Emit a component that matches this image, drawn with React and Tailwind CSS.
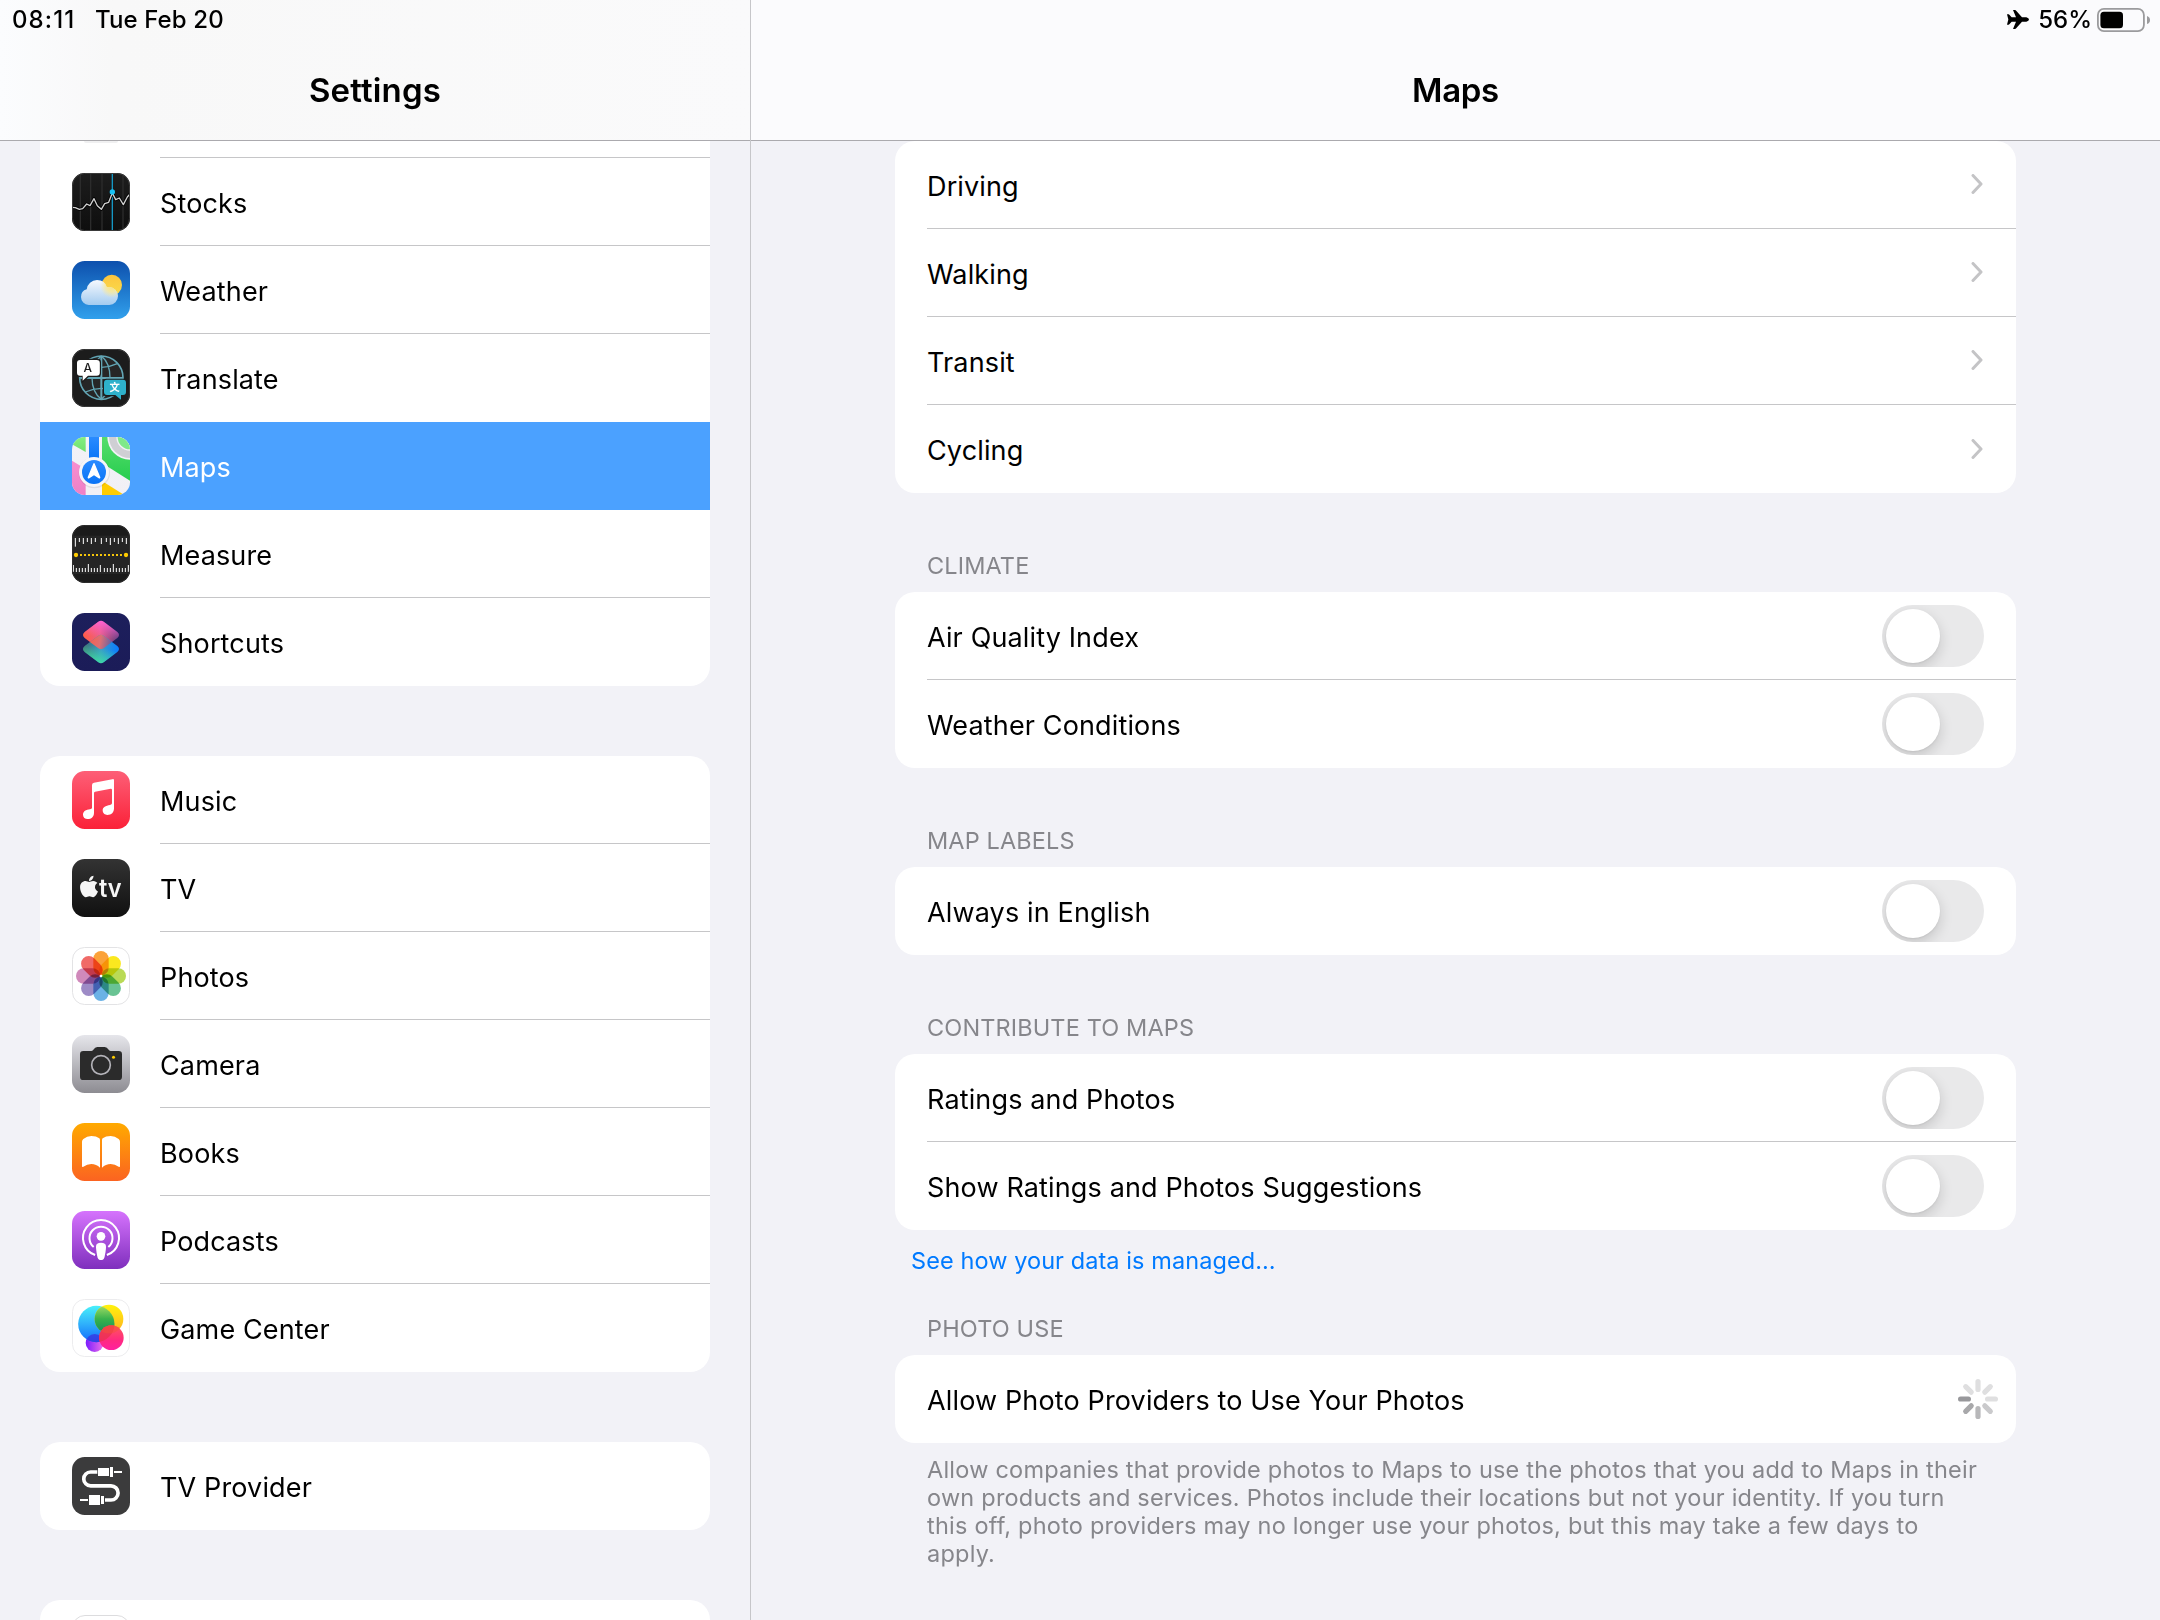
import React from "react";
import { FaApple } from "react-icons/fa";

/* App icons: drawn on a 174 x 174 grid and shown at 58 px. */
function Tile({ id, from, to, children, border }) {
  return (
    <svg viewBox="0 0 174 174" className="size-[58px] shrink-0">
      <defs>
        <linearGradient id={`${id}-bg`} x1="0" y1="0" x2="0" y2="1">
          <stop offset="0" stopColor={from} />
          <stop offset="1" stopColor={to} />
        </linearGradient>
        <clipPath id={`${id}-clip`}>
          <rect width="174" height="174" rx="38" />
        </clipPath>
      </defs>
      <g clipPath={`url(#${id}-clip)`}>
        <rect width="174" height="174" fill={`url(#${id}-bg)`} />
        {children}
      </g>
      {border && <rect x="1.5" y="1.5" width="171" height="171" rx="36.5" fill="none" stroke={border} strokeWidth="3" />}
    </svg>
  );
}

function Grad({ id, stops, x1 = 0, y1 = 0, x2 = 0, y2 = 1 }) {
  return (
    <linearGradient id={id} x1={x1} y1={y1} x2={x2} y2={y2}>
      {stops.map(([o, c, a], i) => (
        <stop key={i} offset={o} stopColor={c} stopOpacity={a ?? 1} />
      ))}
    </linearGradient>
  );
}

const StocksIcon = () => (
  <Tile id="stocks" from="#1d1d1d" to="#0e0e0e" border="#3a3a3a">
    <path d="M25 0V174M56 0V174M90 0V174M153 0V174" stroke="#2c2c2c" strokeWidth="4" />
    <path d="M121 0V174" stroke="#1597c4" strokeWidth="4" />
    <path
      d="M0 103L10 104L22 109L32 107L44 93L54 98L66 77L76 98L88 109L98 92L110 88L121 60L131 80L142 75L154 95L166 72L174 63"
      fill="none" stroke="#000" strokeWidth="9" strokeLinejoin="round"
    />
    <path
      d="M0 103L10 104L22 109L32 107L44 93L54 98L66 77L76 98L88 109L98 92L110 88L121 60L131 80L142 75L154 95L166 72L174 63"
      fill="none" stroke="#d0d0d0" strokeWidth="4" strokeLinejoin="round"
    />
    <circle cx="121" cy="57" r="8" fill="#19c3f5" />
  </Tile>
);

const WeatherIcon = () => (
  <Tile id="weather" from="#0d50ad" to="#31a0ec">
    <defs>
      <Grad id="w-sun" stops={[[0, "#fdc53e"], [1, "#f9dc4c"]]} />
      <linearGradient id="w-cloud" gradientUnits="userSpaceOnUse" x1="0" y1="57" x2="0" y2="132">
        <stop offset="0" stopColor="#f6f9fe" />
        <stop offset="1" stopColor="#a3cbf0" />
      </linearGradient>
      <radialGradient id="w-glow" gradientUnits="userSpaceOnUse" cx="119" cy="76" r="34">
        <stop offset="0" stopColor="#fbe37a" />
        <stop offset="0.5" stopColor="#fbe88f" stopOpacity="0.75" />
        <stop offset="1" stopColor="#fbe88f" stopOpacity="0" />
      </radialGradient>
      <clipPath id="w-shape">
        <circle cx="75" cy="88" r="31" />
        <circle cx="51" cy="108" r="24" />
        <circle cx="111" cy="105" r="27" />
        <rect x="50" y="90" width="62" height="42" />
      </clipPath>
    </defs>
    <circle cx="119.500" cy="72" r="30.500" fill="url(#w-sun)" />
    <g clipPath="url(#w-shape)">
      <rect width="174" height="174" fill="url(#w-cloud)" />
      <rect width="174" height="174" fill="url(#w-glow)" />
    </g>
  </Tile>
);

const TranslateIcon = () => (
  <Tile id="translate" from="#1c1c1c" to="#1c1c1c" border="#3a3a3a">
    <g fill="none" stroke="#62a5b4" strokeWidth="5">
      <circle cx="88" cy="86" r="65" fill="#262626" />
      <path d="M88 21V151M23 87H153" strokeWidth="6" />
      <path d="M88 21C112 40 114 66 114 86M88 21C62 40 60 66 60 86S64 132 88 151M114 86C114 106 112 132 88 151M40 44Q88 66 136 44M40 129Q88 107 136 129" strokeWidth="4" />
    </g>
    <path d="M22 29H76Q87 29 87 40V73Q87 84 76 84H50L30 102V84H22Q11 84 11 73V40Q11 29 22 29Z" fill="#1c1c1c" />
    <path d="M24 33H74Q83.500 33 83.500 42V71Q83.500 80 74 80H48L32 95V80H24Q15 80 15 71V42Q15 33 24 33Z" fill="#fff" />
    <path d="M104 89H154Q165 89 165 100V131Q165 142 154 142H150V156L132 142H104Q93 142 93 131V100Q93 89 104 89Z" fill="#1c1c1c" />
    <path d="M105 92.500H153Q162 92.500 162 102V129Q162 138 153 138H147V152L130 138H105Q96 138 96 129V102Q96 92.500 105 92.500Z" fill="#2eb1cb" />
    <text x="47" y="70" textAnchor="middle" fontFamily="Inter, sans-serif" fontSize="36" fontWeight="500" fill="#1c1c1c">A</text>
    <text x="128" y="127" textAnchor="middle" fontFamily="'Noto Sans CJK SC', sans-serif" fontSize="31" fontWeight="700" fill="#fff">文</text>
  </Tile>
);

const MapsIcon = () => (
  <Tile id="maps" from="#f3f2f7" to="#f1f0f5">
    <defs>
      <Grad id="m-green" stops={[[0, "#55dd6c"], [1, "#27cd4e"]]} />
      <Grad id="m-lime" stops={[[0, "#84ef80"], [1, "#70e070"]]} />
      <Grad id="m-blue" stops={[[0, "#2a8bff"], [1, "#0a74f6"]]} />
      <Grad id="m-pink" stops={[[0, "#f78fd0"], [1, "#ee80c6"]]} />
    </defs>
    <path d="M0 0H41V45L0 22Z" fill="url(#m-lime)" />
    <path d="M90 0H174V131L90 78Z" fill="url(#m-green)" />
    <circle cx="174" cy="0" r="68" fill="#f3f2f7" />
    <circle cx="174" cy="0" r="63" fill="#cfcfd4" />
    <circle cx="174" cy="0" r="41" fill="#f3f2f7" />
    <circle cx="174" cy="0" r="37" fill="#7fe98a" />
    <path d="M0 71L41 96V174H0Z" fill="url(#m-pink)" />
    <path d="M90 132L152 171V174H90Z" fill="#ffcc02" />
    <rect x="51" y="0" width="30" height="70" fill="url(#m-blue)" />
    <circle cx="67" cy="107" r="47" fill="#000" opacity=".08" />
    <circle cx="66" cy="105" r="45" fill="#f5f5f8" />
    <circle cx="66" cy="105" r="36" fill="url(#m-blue)" />
    <path d="M66 80L83 121Q84 124 81 122L66 112L51 122Q48 124 49 121Z" fill="#fff" stroke="#fff" strokeWidth="4" strokeLinejoin="round" />
  </Tile>
);

const topTicks = [[10, 65], [22, 51], [34, 57], [46, 51], [58, 57], [70, 51], [88, 57], [103, 51], [115, 60], [127, 51], [139, 57], [151, 51], [163, 57]];
const bottomTicks = [[4, 120], [13, 129], [22, 129], [31, 129], [40, 129], [49, 117], [58, 129], [67, 129], [76, 129], [85, 120], [97, 129], [106, 129], [115, 129], [124, 117], [133, 129], [142, 129], [151, 129], [160, 129], [169, 120]];

const MeasureIcon = () => (
  <Tile id="measure" from="#1b1b1b" to="#1b1b1b" border="#2e2e2e">
    <rect y="32" width="174" height="115" fill="#252525" />
    {topTicks.map(([x, y]) => <rect key={x} x={x - 1.5} y="39" width="3" height={y - 39} fill="#fff" />)}
    {bottomTicks.map(([x, y]) => <rect key={x} x={x - 1.5} y={y} width="3" height={141 - y} fill="#fff" />)}
    <circle cx="12" cy="90" r="6.500" fill="#fc0" />
    <circle cx="162" cy="90" r="6.500" fill="#fc0" />
    {[24, 36, 48, 60, 72, 84, 96, 108, 120, 132, 144].map((x) => <rect key={x} x={x} y="87" width="6" height="6" fill="#f5c60a" />)}
  </Tile>
);

/* Gradient coordinates are relative to the centre line of each diamond. */
const ShortcutsIcon = () => (
  <Tile id="shortcuts" from="#1d1f5c" to="#1b1c58">
    <defs>
      <linearGradient id="s-top" gradientUnits="userSpaceOnUse" x1="36" y1="12" x2="138" y2="0">
        <stop offset="0" stopColor="#ff5c46" />
        <stop offset="0.5" stopColor="#ea5f8a" />
        <stop offset="1" stopColor="#5c3c80" />
      </linearGradient>
      <linearGradient id="s-pink" gradientUnits="userSpaceOnUse" x1="92" y1="-44" x2="84" y2="8">
        <stop offset="0" stopColor="#ff62dc" stopOpacity="0.95" />
        <stop offset="1" stopColor="#ff5fc0" stopOpacity="0" />
      </linearGradient>
      <linearGradient id="s-bot" gradientUnits="userSpaceOnUse" x1="36" y1="-4" x2="138" y2="0">
        <stop offset="0" stopColor="#3d6a72" />
        <stop offset="0.5" stopColor="#3a9bc8" />
        <stop offset="1" stopColor="#0a7dff" />
      </linearGradient>
      <linearGradient id="s-mint" gradientUnits="userSpaceOnUse" x1="80" y1="44" x2="92" y2="-4">
        <stop offset="0" stopColor="#3fe0a0" stopOpacity="0.95" />
        <stop offset="1" stopColor="#3fe0a0" stopOpacity="0" />
      </linearGradient>
      <linearGradient id="s-mix" gradientUnits="userSpaceOnUse" x1="50" y1="-24" x2="125" y2="-10">
        <stop offset="0" stopColor="#f8604c" />
        <stop offset="0.45" stopColor="#dd6f74" />
        <stop offset="1" stopColor="#4a5fb0" />
      </linearGradient>
      <path id="s-d" d="M76 -37.500Q87 -47.500 98 -37.500L136 -9Q146 0 136 9L98 37.500Q87 47.500 76 37.500L38 9Q28 0 38 -9Z" />
      <clipPath id="s-clip"><use href="#s-d" y="66" /></clipPath>
    </defs>
    <use href="#s-d" y="66" fill="url(#s-top)" />
    <use href="#s-d" y="66" fill="url(#s-pink)" />
    <use href="#s-d" y="108" fill="url(#s-bot)" />
    <use href="#s-d" y="108" fill="url(#s-mint)" />
    <g clipPath="url(#s-clip)"><use href="#s-d" y="108" fill="url(#s-mix)" /></g>
  </Tile>
);

const MusicIcon = () => (
  <Tile id="music" from="#fd5f77" to="#fb2138">
    <path
      d="M126 28Q126 23 121 24.500L66 35Q60 36 60 42V110Q60 114 54 115C42 116 33 121 33 131C33 139 39 144 47 144C58 144 66 137 66 125V66Q66 63 69 62.500L116 53.500Q120 53 120 57V97Q120 101 114 102C101 104 92 109 92 118C92 127 99 132 106 132C118 132 126 125 126 112Z"
      fill="#fff"
    />
  </Tile>
);

const TvIcon = () => (
  <Tile id="tv" from="#333" to="#101010">
    <FaApple x="14.500" y="46" size="73" color="#f6f6f6" />
    <text x="81" y="113" fontFamily="Inter, sans-serif" fontSize="76" fontWeight="600" fill="#f6f6f6" textLength="68" lengthAdjust="spacingAndGlyphs">tv</text>
  </Tile>
);

const petals = ["#fba23a", "#fbe81f", "#b9da55", "#69c393", "#6bb2e6", "#9d8bc6", "#d089bb", "#f06a68"];
const PhotosIcon = () => (
  <Tile id="photos" from="#fff" to="#fff" border="#e3e3e5">
    <g className="isolate">
      {petals.map((c, i) => (
        <rect key={c} x="64" y="12" width="46" height="73" rx="23" fill={c} className="mix-blend-multiply" transform={`rotate(${i * 45} 87 87)`} />
      ))}
    </g>
    <circle cx="87" cy="87" r="4" fill="#fff" />
  </Tile>
);

const CameraIcon = () => (
  <Tile id="camera" from="#e6e6eb" to="#8d8c92">
    <path d="M34 48H58Q61 48 64 44Q69 36 76 36H98Q105 36 110 44Q113 48 116 48H140Q150 48 150 58V125Q150 135 140 135H34Q24 135 24 125V58Q24 48 34 48Z" fill="#2b2b2b" />
    <circle cx="87" cy="90" r="28" fill="none" stroke="#b4b3b9" strokeWidth="5" />
    <circle cx="124.500" cy="67" r="4.500" fill="#fc0" />
  </Tile>
);

const BooksIcon = () => (
  <Tile id="books" from="#ffaa00" to="#fb6321">
    <path d="M30 56Q30 51 34 48Q45 39 58 39Q73 39 82 46Q84 48 84 52V134Q73 123 58 123Q45 123 34 131Q30 133 30 129Z" fill="#fff" />
    <path d="M144 56Q144 51 140 48Q129 39 116 39Q101 39 92 46Q90 48 90 52V134Q101 123 116 123Q129 123 140 131Q144 133 144 129Z" fill="#fff" />
  </Tile>
);

const PodcastsIcon = () => (
  <Tile id="podcasts" from="#d673fd" to="#7f2fbd">
    <g fill="none" stroke="#fff" strokeWidth="6">
      <path d="M69.400 132A54 54 0 1 1 104.600 132" />
      <path d="M65 108A34.500 34.500 0 1 1 109 108" />
    </g>
    <circle cx="87" cy="76" r="13" fill="#fff" />
    <path d="M87 95.500C97 95.500 102 99 102 107C102 115 99 133 97 140C95.500 145 92 147 87 147S78.500 145 77 140C75 133 72 115 72 107C72 99 77 95.500 87 95.500Z" fill="#fff" />
  </Tile>
);

const GameCenterIcon = () => (
  <Tile id="game" from="#fff" to="#fff" border="#ececee">
    <defs>
      <Grad id="g-cyan" stops={[[0, "#48f0fa"], [0.500, "#2fb0fb"], [1, "#126cfc"]]} />
      <Grad id="g-yellow" stops={[[0, "#fff30c"], [1, "#ffae22"]]} />
      <Grad id="g-green" stops={[[0, "#a8dd66"], [0.500, "#38b24c"], [1, "#128f5c"]]} />
      <Grad id="g-pink" stops={[[0, "#ff5a5a"], [0.600, "#ff2a80"], [1, "#ff20a0"]]} />
      <Grad id="g-purple" x2={1} y2={0} stops={[[0, "#7a1cff"], [1, "#f070e8"]]} />
      <clipPath id="g-c1"><circle cx="73" cy="75" r="54.500" /></clipPath>
      <clipPath id="g-c2"><circle cx="111" cy="60" r="43" /></clipPath>
    </defs>
    <circle cx="68" cy="132" r="27" fill="url(#g-purple)" />
    <circle cx="73" cy="75" r="54.500" fill="url(#g-cyan)" />
    <g clipPath="url(#g-c1)"><circle cx="68" cy="132" r="27" fill="#3a32e0" opacity=".75" /></g>
    <circle cx="111" cy="60" r="43" fill="url(#g-yellow)" />
    <g clipPath="url(#g-c1)"><circle cx="111" cy="60" r="43" fill="url(#g-green)" /></g>
    <circle cx="118" cy="116" r="37" fill="url(#g-pink)" />
    <g clipPath="url(#g-c1)"><circle cx="118" cy="116" r="37" fill="#e8304c" opacity=".7" /></g>
    <g clipPath="url(#g-c2)"><circle cx="118" cy="116" r="37" fill="#f5503c" opacity=".5" /></g>
  </Tile>
);

const TvProviderIcon = () => (
  <Tile id="tvp" from="#3b3b3c" to="#3b3b3c">
    <path d="M76 45H56A20.500 20.500 0 0 0 56 86.500H117A21 21 0 0 1 117 129H99" fill="none" stroke="#fff" strokeWidth="11" />
    <g fill="#fff">
      <rect x="78" y="33" width="33" height="24" />
      <rect x="114" y="30" width="9" height="30" />
      <rect x="126" y="42" width="24" height="6" />
      <rect x="87" y="117" width="9" height="24" />
      <rect x="51" y="114" width="33" height="30" />
      <rect x="24" y="126" width="24" height="6" />
    </g>
  </Tile>
);

const BlankIcon = () => <div className="size-[58px] shrink-0 rounded-[13px] border border-[#dcdcde] bg-white" />;

function AirplaneGlyph() {
  return (
    <svg viewBox="0 0 66 57" className="mr-[9px] h-[19px] w-[22px]">
      <path d="M14 22H27L18 0H24Q26 0 27.500 2L45 22H58Q66 24 66 28.500T58 35H45L27.500 55Q26 57 24 57H18L27 35H14L7 43Q6 44 5 44H0L4 28.500L0 13H5Q6 13 7 14Z" fill="#000" />
    </svg>
  );
}

function BatteryGlyph() {
  return (
    <svg viewBox="0 0 54 24" className="ml-[5px] h-6 w-[54px]">
      <rect x="0.900" y="0.900" width="46" height="22.200" rx="6" fill="none" stroke="#9b9b9d" strokeWidth="1.800" />
      <rect x="3.400" y="3.700" width="22.600" height="16.600" rx="3.500" fill="#000" />
      <path d="M50 8V16Q53 15 53 12T50 8Z" fill="#9b9b9d" />
    </svg>
  );
}

const spinnerBars = ["#dfdfe0", "#dfdfe0", "#dfdfe0", "#cacacc", "#b8b8ba", "#a8a8aa", "#98989b", "#dfdfe0"];
const Spinner = () => (
  <svg viewBox="-20 -20 40 40" className="-mr-3.5 size-10">
    {spinnerBars.map((c, i) => (
      <rect key={i} x="-2.600" y="-20" width="5.200" height="13" rx="2.600" fill={c} transform={`rotate(${i * 45})`} />
    ))}
  </svg>
);

const Chevron = () => (
  <svg viewBox="0 0 12 20" className="mr-[1.5px] mb-px h-5 w-3">
    <path d="M2 1.500L10 10L2 18.500" fill="none" stroke="#c4c4c6" strokeWidth="3" strokeLinecap="round" strokeLinejoin="round" />
  </svg>
);

const Toggle = () => (
  <div className="h-[62px] w-[102px] overflow-hidden rounded-full bg-[#e9e9ea] p-1">
    <div className="size-[54px] rounded-full bg-white shadow-[0_5px_14px_rgba(0,0,0,0.16),0_1px_2px_rgba(0,0,0,0.06)]" />
  </div>
);

const label = "text-[27px] leading-[34px] tracking-[0.14px]";

function SidebarRow({ icon: Icon, text, selected, divider }) {
  return (
    <div className={`flex h-[88px] items-center pl-8 ${selected ? "bg-[#4ba1ff] text-white" : ""}`}>
      <Icon />
      <div className={`ml-[30px] flex h-full flex-1 items-center pt-1 ${divider ? "border-b border-[#c6c6c8]" : ""}`}>
        <span className={label}>{text}</span>
      </div>
    </div>
  );
}

function SidebarGroup({ rows, className = "rounded-[20px]" }) {
  return (
    <div className={`overflow-hidden bg-white ${className}`}>
      {rows.map(([text, icon, opts], i) => (
        <SidebarRow key={text} text={text} icon={icon} selected={opts === "selected"} divider={i < rows.length - 1 && !opts} />
      ))}
    </div>
  );
}

function Card({ rows }) {
  return (
    <div className="rounded-[20px] bg-white pl-8">
      {rows.map(([text, Control], i) => (
        <div key={text} className={`flex h-[88px] items-center justify-between pr-8 ${i < rows.length - 1 ? "border-b border-[#c6c6c8]" : ""}`}>
          <span className={`${label} pt-1`}>{text}</span>
          <Control />
        </div>
      ))}
    </div>
  );
}

const caption = "text-[23.5px] leading-[28px] tracking-[0.13px] text-[#86868b]";
const SectionTitle = ({ children }) => (
  <div className={`flex h-[99px] items-end pb-3 pl-8 ${caption}`}>{children}</div>
);

export default function App() {
  return (
    <div className="flex h-[1620px] w-[2160px] overflow-hidden bg-[#f2f2f7] font-['Inter',sans-serif] text-black">
      <aside className="flex w-[751px] shrink-0 flex-col border-r border-[#c6c6c9]">
        <header className="h-[141px] shrink-0 border-b border-[#abaaae] bg-linear-to-r from-[#fbfcfe] via-[#f8f8f8] via-15% to-[#fafafb]">
          <div className="flex h-[39px] items-center pl-3 text-[24px] leading-none font-medium">
            <span className="w-[83px] tracking-[1.1px]">08:11</span>
            <span className="tracking-[0.1px]">Tue Feb 20</span>
          </div>
          <h1 className="flex h-[101px] items-center justify-center pt-0.5 text-[33px] leading-none font-semibold tracking-[0.15px]">Settings</h1>
        </header>
        <div className="flex-1 overflow-hidden pr-10 pl-10">
          <div className="flex h-[17px] items-start bg-white pl-8">
            <div className="h-[2px] w-[58px] px-3">
              <div className="h-[2px] rounded-b-full bg-[#f0f0f1]" />
            </div>
            <div className="ml-[30px] h-full flex-1 border-b border-[#c6c6c8]" />
          </div>
          <SidebarGroup
            className="rounded-b-[20px]"
            rows={[
              ["Stocks", StocksIcon],
              ["Weather", WeatherIcon],
              ["Translate", TranslateIcon, "plain"],
              ["Maps", MapsIcon, "selected"],
              ["Measure", MeasureIcon],
              ["Shortcuts", ShortcutsIcon],
            ]}
          />
          <div className="mt-[70px]">
            <SidebarGroup
              rows={[
                ["Music", MusicIcon],
                ["TV", TvIcon],
                ["Photos", PhotosIcon],
                ["Camera", CameraIcon],
                ["Books", BooksIcon],
                ["Podcasts", PodcastsIcon],
                ["Game Center", GameCenterIcon],
              ]}
            />
          </div>
          <div className="mt-[70px]">
            <SidebarGroup rows={[["TV Provider", TvProviderIcon]]} />
          </div>
          <div className="mt-[70px]">
            <SidebarGroup rows={[["", BlankIcon]]} />
          </div>
        </div>
      </aside>
      <main className="flex flex-1 flex-col">
        <header className="h-[141px] shrink-0 border-b border-[#abaaae] bg-[#fbfbfd]">
          <div className="flex h-[39px] items-center justify-end pr-[9px] text-[24px] leading-none font-medium">
            <AirplaneGlyph />
            <span className="pt-px">56%</span>
            <BatteryGlyph />
          </div>
          <h1 className="flex h-[101px] items-center justify-center pt-0.5 text-[33px] leading-none font-semibold tracking-[-0.3px]">Maps</h1>
        </header>
        <div className="flex-1 overflow-hidden px-36">
          <Card rows={[["Driving", Chevron], ["Walking", Chevron], ["Transit", Chevron], ["Cycling", Chevron]]} />
          <SectionTitle>CLIMATE</SectionTitle>
          <Card rows={[["Air Quality Index", Toggle], ["Weather Conditions", Toggle]]} />
          <SectionTitle>MAP LABELS</SectionTitle>
          <Card rows={[["Always in English", Toggle]]} />
          <SectionTitle>CONTRIBUTE TO MAPS</SectionTitle>
          <Card rows={[["Ratings and Photos", Toggle], ["Show Ratings and Photos Suggestions", Toggle]]} />
          <div className="flex h-[125px] flex-col justify-between pt-[17px] pb-3">
            <a className="pl-4 text-[23.5px] leading-[28px] tracking-[0.08px] text-[#007aff]">See how your data is managed…</a>
            <div className={`pl-8 ${caption}`}>PHOTO USE</div>
          </div>
          <Card rows={[["Allow Photo Providers to Use Your Photos", Spinner]]} />
          <p className="mt-[13px] pr-8 pl-8 text-[23.5px] leading-[28px] tracking-[0.22px] text-[#86868b]">
            Allow companies that provide photos to Maps to use the photos that you add to Maps in their own products and
            services. Photos include their locations but not your identity. If you turn this off, photo providers may no
            longer use your photos, but this may take a few days to apply.
          </p>
        </div>
      </main>
    </div>
  );
}
